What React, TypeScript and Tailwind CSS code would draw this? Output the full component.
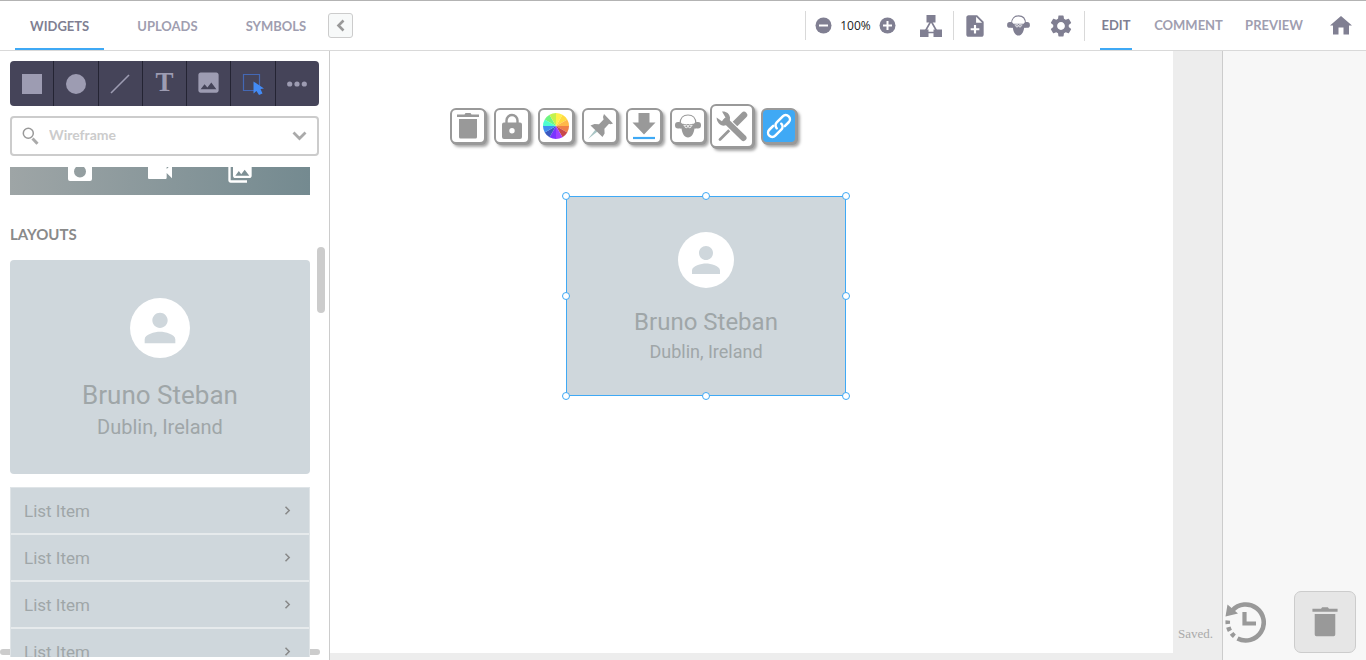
import React from "react";
import {
  MdImage,
  MdNoteAdd,
  MdPerson,
  MdPhotoLibrary,
  MdSettings,
  MdVideocam,
} from "react-icons/md";

const WHEEL = [
  "#fff04a", "#ffdb3f", "#ffb84a", "#f08048", "#c8484a", "#a040ff",
  "#7a34ff", "#3a58c0", "#3f8ff0", "#4dffd0", "#6ef580", "#c4f24c",
];

function ColorWheel() {
  const n = WHEEL.length;
  return (
    <svg width="26" height="26" viewBox="-13 -13 26 26" aria-hidden="true">
      {WHEEL.map((color, i) => {
        const a = (i / n) * Math.PI * 2;
        const b = ((i + 1) / n) * Math.PI * 2;
        return (
          <path
            key={color}
            fill={color}
            d={`M0 0L${13 * Math.sin(a)} ${-13 * Math.cos(a)}A13 13 0 0 1 ${13 * Math.sin(b)} ${-13 * Math.cos(b)}Z`}
          />
        );
      })}
    </svg>
  );
}

function TrashIcon({ className }: { className: string }) {
  return (
    <svg className={className} viewBox="0 0 24 28" fill="currentColor" aria-hidden="true">
      <path d="M1 2.5h7.5L9.5 1h5l1 1.5H23V5H1zM3 7h18v18a1.5 1.5 0 0 1-1.5 1.5h-15A1.5 1.5 0 0 1 3 25z" />
    </svg>
  );
}

function LockIcon() {
  return (
    <svg width="22" height="27" viewBox="0 0 22 27" aria-hidden="true">
      <path d="M5.500 11V7.500a5.500 5.500 0 0 1 11 0V11" fill="none" stroke="#999" strokeWidth="2.400" />
      <path
        fill="#999"
        fillRule="evenodd"
        d="M3 9.500h16a2 2 0 0 1 2 2V24a2 2 0 0 1-2 2H3a2 2 0 0 1-2-2V11.500a2 2 0 0 1 2-2zM11 15a2.700 2.700 0 1 0 0 5.400A2.700 2.700 0 0 0 11 15z"
      />
    </svg>
  );
}

function CameraIcon() {
  return (
    <svg width="24" height="22" viewBox="0 0 24 22" fill="#fff" aria-hidden="true">
      <path
        fillRule="evenodd"
        d="M8 0h8l2 2.500h4a2 2 0 0 1 2 2V19a2 2 0 0 1-2 2H2a2 2 0 0 1-2-2V4.500a2 2 0 0 1 2-2h4zM12 5.500a6 6 0 1 0 0 12 6 6 0 0 0 0-12z"
      />
    </svg>
  );
}

function FaceIcon({ className }: { className: string }) {
  return (
    <svg className={className} viewBox="0 0 26 24" aria-hidden="true">
      <path d="M5 10C5 4 8.500 1 13 1s8 3 8 9" fill="#fff" stroke="currentColor" strokeWidth="1.200" />
      <path
        fill="currentColor"
        d="M5 9c2 .8 3 .9 4 .9h8c1 0 2-.1 4-.9v5.500h-1.500C18.800 19.500 16.500 23.500 13 23.500S7.200 19.500 6.500 14.500H5z"
      />
      <rect x="0" y="8" width="7" height="6.600" rx="3" fill="currentColor" />
      <rect x="19" y="8" width="7" height="6.600" rx="3" fill="currentColor" />
      <g fill="none" stroke="#fff" strokeWidth="0.9">
        <circle cx="11.300" cy="12.300" r="1.400" />
        <circle cx="14.700" cy="12.300" r="1.400" />
        <path d="M8.500 11.300h1.500M16 11.300h1.500" />
      </g>
    </svg>
  );
}

function PinIcon() {
  return (
    <svg width="27" height="27" viewBox="0 0 27 27" aria-hidden="true">
      <path d="M8.500 16.500 1 26l9.500-7.500z" fill="#a9c5c5" />
      <path
        fill="#999"
        d="M17 1l9 9.500-2.500.8-1.500-.6-4.600 5 .2 4.800L15.500 24 3.500 12.500l4-1.500 4.500.2 4.600-4.600-.6-2.600z"
      />
    </svg>
  );
}

function ToolsIcon() {
  return (
    <svg width="32" height="31" viewBox="0 0 32 31" aria-hidden="true">
      <path d="M4 28.500 14 18.500" stroke="#999" strokeWidth="2.800" strokeLinecap="round" />
      <path d="M19.500 12.500 28 4" stroke="#999" strokeWidth="6.500" strokeLinecap="round" />
      <path d="M10 10 27 27" stroke="#fff" strokeWidth="8.500" />
      <path d="M10 10 27.500 27" stroke="#999" strokeWidth="6" strokeLinecap="round" />
      <path
        fill="#999"
        d="M6 .6C10 .2 13.500 2.500 14 6.500l-.3 5-4.500 3C4.500 15.500.8 11.500.6 6.500l5.200 3.800 3.700-3.800z"
      />
    </svg>
  );
}

function LinkIcon() {
  return (
    <svg width="28" height="28" viewBox="-14 -14 28 28" fill="none" stroke="#fff" strokeWidth="2.500" strokeLinecap="round" aria-hidden="true">
      <g transform="rotate(-45)">
        <path d="M4 4.200H9.500a4.200 4.200 0 0 0 0-8.400H1a4.200 4.200 0 0 0-4.200 4.200" />
        <path d="M-4-4.200H-9.500a4.200 4.200 0 0 0 0 8.400H-1a4.200 4.200 0 0 0 4.200-4.200" />
      </g>
    </svg>
  );
}

function HistoryIcon() {
  return (
    <svg width="41" height="42" viewBox="0 0 41 42" aria-hidden="true">
      <g fill="none" stroke="#999">
        <path d="M7.300 9.500A18 18 0 1 1 12.500 37.500" strokeWidth="4.600" />
        <path d="M9.400 35.200A18 18 0 0 1 2.800 19.500" strokeWidth="4.600" strokeDasharray="4 3" />
        <path d="M19.500 11v11.500H31" strokeWidth="4.200" />
      </g>
      <path d="M2.500 3.500 13 12.500.5 15.500z" fill="#999" />
    </svg>
  );
}

function ContactCard({ large }: { large?: boolean }) {
  return (
    <div
      className={
        large
          ? "flex h-[214px] flex-col items-center rounded bg-[#cfd7dc] pt-[38px] font-['Roboto',sans-serif] text-[#9fa6a8]"
          : "flex h-full flex-col items-center bg-[#cfd7dc] pt-[35px] font-['Roboto',sans-serif] text-[#9fa6a8]"
      }
    >
      <div
        className={
          large
            ? "flex size-[60px] items-center justify-center rounded-full bg-white"
            : "flex size-14 items-center justify-center rounded-full bg-white"
        }
      >
        <MdPerson className={large ? "size-[46px] text-[#cfd7dc]" : "size-[42px] text-[#cfd7dc]"} />
      </div>
      <p className={large ? "mt-[21px] text-[26px] leading-8" : "mt-[18px] text-[24px] leading-8"}>Bruno Steban</p>
      <p className={large ? "text-[20px] leading-8" : "text-[18px] leading-7"}>Dublin, Ireland</p>
    </div>
  );
}

const toolCell = "flex flex-1 items-center justify-center border-r border-[#242433] last:border-r-0";
const actionButton =
  "flex size-9 items-center justify-center rounded-[6px] border-2 border-[#999] bg-white text-[#999] shadow-[1px_1px_0_#999,3px_3px_3px_rgba(0,0,0,0.35)]";

function Tab({ children, active }: { children: React.ReactNode; active?: boolean }) {
  return (
    <button
      type="button"
      className={
        active
          ? "h-full border-b-2 border-[#3fa9f5] px-[15px] pt-1 text-[#807f92]"
          : "h-full border-b-2 border-transparent px-[15px] pt-1 text-[#9f9eb0]"
      }
    >
      {children}
    </button>
  );
}

function Header() {
  return (
    <header className="flex h-[51px] shrink-0 border-t border-b border-t-[#b3b3b3] border-b-[#d9d9d9] bg-white text-[13px] font-bold">
      <nav className="flex gap-[18px] pl-[15px]" aria-label="Library">
        <Tab active>WIDGETS</Tab>
        <Tab>UPLOADS</Tab>
        <Tab>SYMBOLS</Tab>
      </nav>
      <button
        type="button"
        aria-label="Collapse sidebar"
        className="mt-3 ml-[7px] flex size-[25px] items-center justify-center rounded-[3px] border border-[#ccc] bg-[#f7f9f9]"
      >
        <svg width="9" height="13" viewBox="0 0 9 13" aria-hidden="true">
          <path d="M7.500 1.500 2.500 6.500l5 5" fill="none" stroke="#999" strokeWidth="2.600" />
        </svg>
      </button>

      <div className="my-2.5 ml-auto flex w-[148px] items-center border-l border-[#d9d9d9] pl-[9px] text-[#807f92]">
        <button type="button" aria-label="Zoom out">
          <svg width="17" height="17" viewBox="0 0 17 17" aria-hidden="true">
            <circle cx="8.500" cy="8.500" r="8" fill="currentColor" />
            <path d="M4 8.500h9" stroke="#fff" strokeWidth="2" />
          </svg>
        </button>
        <span className="w-[47px] text-center font-['Open_Sans',sans-serif] text-[12px] font-normal text-[#222]">100%</span>
        <button type="button" aria-label="Zoom in">
          <svg width="17" height="17" viewBox="0 0 17 17" aria-hidden="true">
            <circle cx="8.500" cy="8.500" r="8" fill="currentColor" />
            <path d="M4 8.500h9M8.500 4v9" stroke="#fff" strokeWidth="2" />
          </svg>
        </button>
        <button type="button" aria-label="Site map" className="ml-[23px]">
          <svg width="24" height="22" viewBox="0 0 24 22" aria-hidden="true">
            <path d="M7.500 0h9v7.500h-9zM1 14.500h8.500V22H1zM14.500 14.500H23V22h-8.500z" fill="currentColor" />
            <path d="M12 6 5.500 17.500h13z" fill="none" stroke="currentColor" strokeWidth="1.600" />
          </svg>
        </button>
      </div>
      <div className="my-2.5 flex w-[131px] items-center justify-between border-l border-[#d9d9d9] pr-2.5 pl-2 text-[#807f92]">
        <button type="button" aria-label="Add page">
          <MdNoteAdd className="size-[26px]" />
        </button>
        <button type="button" aria-label="Profile">
          <FaceIcon className="h-[21px] w-[23px]" />
        </button>
        <button type="button" aria-label="Settings">
          <MdSettings className="size-[26px]" />
        </button>
      </div>
      <div className="flex w-[282px] items-center pr-3.5">
        <div className="h-[30px] w-px bg-[#d9d9d9]" />
        <nav className="ml-[15px] flex h-full flex-1 justify-between text-[#9f9eb0]" aria-label="Mode">
          <button type="button" className="h-full w-8 border-b-2 border-[#3fa9f5] pt-0.5 text-[#807f92]">EDIT</button>
          <button type="button">COMMENT</button>
          <button type="button">PREVIEW</button>
        </nav>
        <a href="#home" aria-label="Home" className="ml-[27px] text-[#807f92]">
          <svg width="22" height="19" viewBox="0 0 22 19" fill="currentColor" aria-hidden="true">
            <path d="M11 0 0 9.500h3V18.500h5.500v-7h5v7H19V9.500h3z" />
          </svg>
        </a>
      </div>
    </header>
  );
}

function Sidebar() {
  return (
    <aside className="relative flex w-[330px] shrink-0 flex-col border-r border-[#ccc] bg-white pt-2.5 pr-2.5 pb-[3px] pl-2.5">
      <div className="flex h-[45px] shrink-0 overflow-hidden rounded-[4px] bg-[#454459] text-[#9d9cb2]">
        <button type="button" aria-label="Rectangle" className={toolCell}>
          <span className="size-5 bg-[#9d9cb2]" />
        </button>
        <button type="button" aria-label="Ellipse" className={toolCell}>
          <span className="size-5 rounded-full bg-[#9d9cb2]" />
        </button>
        <button type="button" aria-label="Line" className={toolCell}>
          <svg width="20" height="20" viewBox="0 0 20 20" aria-hidden="true">
            <path d="M1 19 19 1" stroke="currentColor" strokeWidth="1.600" />
          </svg>
        </button>
        <button type="button" aria-label="Text" className={`${toolCell} pb-0.5 font-['Liberation_Serif',serif] text-[27px] leading-none font-bold`}>
          T
        </button>
        <button type="button" aria-label="Image" className={`${toolCell} pb-0.5`}>
          <MdImage className="size-[27px]" />
        </button>
        <button type="button" aria-label="Hotspot" className={toolCell}>
          <svg width="22" height="22" viewBox="0 0 22 22" aria-hidden="true">
            <path d="M1.500 1.500h16v16h-16z" fill="none" stroke="#4468b4" strokeWidth="1.200" />
            <path d="M11.500 8.500v12l3-2.500 2.500 4 3.500-1.500-2-4.500 3.500-.5z" fill="#438bf5" />
          </svg>
        </button>
        <button type="button" aria-label="More tools" className={toolCell}>
          <svg width="20" height="6" viewBox="0 0 20 6" fill="currentColor" aria-hidden="true">
            <circle cx="2.700" cy="3" r="2.600" />
            <circle cx="10" cy="3" r="2.600" />
            <circle cx="17.300" cy="3" r="2.600" />
          </svg>
        </button>
      </div>

      <label className="mt-2.5 flex h-10 shrink-0 items-center rounded-[4px] border-2 border-[#ccc] px-2.5">
        <svg width="17" height="18" viewBox="0 0 17 18" aria-hidden="true">
          <circle cx="6.300" cy="6.300" r="5" fill="none" stroke="#999" strokeWidth="1.500" />
          <path d="m10.500 11.500 5 5.200" stroke="#aaa" strokeWidth="3" />
        </svg>
        <input
          type="text"
          aria-label="Search widgets"
          placeholder="Wireframe"
          className="ml-2.5 min-w-0 flex-1 pb-[3px] text-[14px] font-bold placeholder:text-[#ccc] focus:outline-none"
        />
        <svg width="15" height="10" viewBox="0 0 15 10" aria-hidden="true">
          <path d="m1.500 1.500 6 6 6-6" fill="none" stroke="#aaa" strokeWidth="2.800" />
        </svg>
      </label>

      <div className="relative z-10 mt-[11px] mr-[9px] min-h-0 flex-1 overflow-hidden">
        <div className="-mt-5 grid h-12 grid-cols-3 place-items-center bg-linear-to-r from-[#9ea5a6] to-[#748a90] px-[30px] text-white">
          <CameraIcon />
          <MdVideocam className="size-8" />
          <MdPhotoLibrary className="size-7" />
        </div>
        <h2 className="mt-[29px] text-[15px] leading-5 font-bold text-[#8a8a8a]">LAYOUTS</h2>
        <div className="mt-4">
          <ContactCard large />
        </div>
        <ul className="mt-[13px] border-x border-t border-[#dfe4e7] font-['Roboto',sans-serif] text-[17px] text-[#9fa6a8]">
          {[1, 2, 3, 4].map((n) => (
            <li key={n} className="flex h-[47px] items-center justify-between border-b-2 border-[#e6eaec] bg-[#cfd7dc] pr-[18px] pl-[13px]">
              <span className="pt-0.5">List Item</span>
              <svg width="7" height="9" viewBox="0 0 7 9" aria-hidden="true">
                <path d="m1.500.8 3.700 3.700-3.700 3.700" fill="none" stroke="#888" strokeWidth="1.500" />
              </svg>
            </li>
          ))}
        </ul>
      </div>
      <div className="absolute top-[196px] right-1 h-[66px] w-2 rounded-full bg-[#ccc]" />
      <div className="absolute right-[9px] bottom-[5px] left-0 h-1.5 rounded-full bg-[#ccc]" />
    </aside>
  );
}

const handle = "absolute size-2 rounded-full border border-[#3fa9f5] bg-white -translate-x-1/2 -translate-y-1/2";

function Canvas() {
  return (
    <section className="relative min-w-0 flex-1 bg-white" aria-label="Canvas">
      <div className="absolute top-[53px] left-[120px] flex items-center">
        <div className="flex gap-2">
          <button type="button" aria-label="Delete" className={actionButton}>
            <TrashIcon className="h-7 w-6" />
          </button>
          <button type="button" aria-label="Lock" className={actionButton}>
            <LockIcon />
          </button>
          <button type="button" aria-label="Colours" className={actionButton}>
            <ColorWheel />
          </button>
          <button type="button" aria-label="Pin" className={actionButton}>
            <PinIcon />
          </button>
          <button type="button" aria-label="Send to back" className={actionButton}>
            <svg width="24" height="27" viewBox="0 0 24 27" aria-hidden="true">
              <path d="M6.500 0h11v9.500h6L12 21.500.5 9.500h6z" fill="#999" />
              <path d="M1 25h22" stroke="#3fa9f5" strokeWidth="2.200" />
            </svg>
          </button>
          <button type="button" aria-label="Character" className={actionButton}>
            <FaceIcon className="h-6 w-[26px]" />
          </button>
        </div>
        <button
          type="button"
          aria-label="Tools"
          className="ml-1 flex size-11 items-center justify-center rounded-[6px] border-2 border-[#999] bg-white shadow-[1px_1px_0_#999,3px_3px_3px_rgba(0,0,0,0.35)]"
        >
          <ToolsIcon />
        </button>
        <button
          type="button"
          aria-label="Link"
          className="ml-[7px] flex size-9 items-center justify-center rounded-[6px] border-2 border-[#999] bg-[#3fa9f5] shadow-[1px_1px_0_#999,3px_3px_3px_rgba(0,0,0,0.35)]"
        >
          <LinkIcon />
        </button>
      </div>

      <div className="absolute top-[145px] left-[236px] h-[200px] w-[280px] border border-[#3fa9f5]">
        <ContactCard />
        <div className="absolute -top-px -left-px h-[200px] w-[280px]">
          <span className={`${handle} top-0 left-0`} />
          <span className={`${handle} top-0 left-1/2`} />
          <span className={`${handle} top-0 left-full`} />
          <span className={`${handle} top-1/2 left-0`} />
          <span className={`${handle} top-1/2 left-full`} />
          <span className={`${handle} top-full left-0`} />
          <span className={`${handle} top-full left-1/2`} />
          <span className={`${handle} top-full left-full`} />
        </div>
      </div>
    </section>
  );
}

export default function App() {
  return (
    <div className="flex h-screen flex-col overflow-hidden bg-white font-['Lato',sans-serif]">
      <Header />
      <main className="flex min-h-0 flex-1">
        <Sidebar />
        <div className="flex min-w-0 flex-1 bg-[#ededed] pb-[7px]">
          <Canvas />
          <div className="flex w-[49px] shrink-0 items-end justify-center pb-[9px]">
            <span className="pr-1 font-['Liberation_Serif',serif] text-[13px] leading-5 text-[#aaa]">Saved.</span>
          </div>
        </div>
        <aside className="flex w-36 shrink-0 flex-col justify-end border-l border-[#ccc] bg-[#f7f7f7] pr-2.5 pb-[7px] pl-0.5">
          <div className="flex items-center justify-between">
            <button type="button" aria-label="History">
              <HistoryIcon />
            </button>
            <button
              type="button"
              aria-label="Trash"
              className="flex size-[62px] items-center justify-center rounded-[7px] border border-[#ccc] bg-[#e6e6e6] text-[#999]"
            >
              <TrashIcon className="h-8 w-7" />
            </button>
          </div>
        </aside>
      </main>
    </div>
  );
}
